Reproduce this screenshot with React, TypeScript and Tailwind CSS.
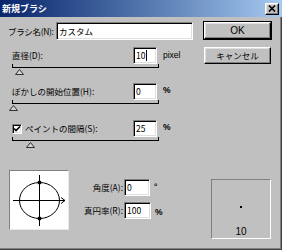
import React from "react";

const sunken =
  "bg-white border border-t-[#808080] border-l-[#808080] border-b-white border-r-white shadow-[inset_1px_1px_0_#000,inset_-1px_-1px_0_#dfdfdf]";
const raised =
  "bg-[#c0c0c0] border border-t-white border-l-white border-b-black border-r-black shadow-[inset_-1px_-1px_0_#808080,inset_1px_1px_0_#dfdfdf]";

function Slider({ thumb }: { thumb: string }) {
  return (
    <div className="ml-[12px] w-[147px]">
      <div className="h-[4px] border-l border-r border-b border-black" />
      <div className={"h-[7px] flex " + thumb}>
        <svg width="9" height="6" viewBox="0 0 9 6" className="mt-[1px]">
          <path d="M4.5 0.5 L8.5 5.5 L0.5 5.5 Z" fill="#d4d4d4" stroke="#303030" strokeWidth="1" />
        </svg>
      </div>
    </div>
  );
}

function Field({ value, caret, w }: { value: string; caret?: boolean; w: string }) {
  return (
    <div className={sunken + " h-[17px] flex items-center pl-[2px] shrink-0 " + w}>
      <span className="leading-none">{value}</span>
      {caret && <span className="w-px h-[11px] bg-black ml-[1px]" />}
    </div>
  );
}

export default function App() {
  return (
    <div className="w-[282px] h-[250px] bg-[#c0c0c0] flex flex-col overflow-hidden font-['Noto_Sans_CJK_JP',sans-serif] text-[8.5px] text-black whitespace-nowrap">
      {/* Title bar */}
      <div className="h-[17px] shrink-0 flex items-center justify-between bg-gradient-to-r from-[#0a246a] to-[#a6caf0] pl-[2px] pr-[3px]">
        <span className="text-white font-bold text-[9px] leading-none">新規ブラシ</span>
        <div className={raised + " w-[14px] h-[12px] flex items-center justify-center"}>
          <svg width="8" height="7" viewBox="0 0 8 7">
            <path d="M1 0.5 L7 6.5 M7 0.5 L1 6.5" stroke="#000" strokeWidth="1.6" />
          </svg>
        </div>
      </div>

      {/* Body */}
      <div className="flex-1 flex flex-col border-r border-b border-[#404040]">
        <div className="flex-1 flex flex-col border-r border-b border-[#808080]">
          <div className="flex">
            {/* Left column */}
            <div className="w-[204px] flex flex-col">
              <div className="mt-[5px] h-[18px] flex items-center">
                <span className="ml-[8px] w-[48px] shrink-0 tracking-[-0.3px]">ブラシ名(N):</span>
                <div className={sunken + " w-[137px] h-[18px] flex items-center pl-[2px] shrink-0"}>カスタム</div>
              </div>

              <div className="mt-[7px] h-[17px] flex items-center">
                <span className="ml-[12px] w-[121px] shrink-0">直径(D):</span>
                <Field value="10" caret w="w-[24px]" />
                <span className="ml-[6px] font-['Liberation_Sans',sans-serif]">pixel</span>
              </div>
              <Slider thumb="ml-[3px]" />

              <div className="mt-[8px] h-[17px] flex items-center">
                <span className="ml-[12px] w-[121px] shrink-0">ぼかしの開始位置(H):</span>
                <Field value="0" w="w-[24px]" />
                <span className="ml-[6px] self-start mt-[1px] font-bold font-['Liberation_Sans',sans-serif]">%</span>
              </div>
              <Slider thumb="ml-[-3px]" />

              <div className="mt-[9px] h-[17px] flex items-center">
                <div className={sunken + " ml-[12px] w-[10px] h-[10px] flex items-center justify-center shrink-0"}>
                  <svg width="8" height="8" viewBox="0 0 8 8">
                    <path d="M1 3.5 L3 5.5 L7 1.5" stroke="#000" strokeWidth="1.6" fill="none" />
                  </svg>
                </div>
                <span className="ml-[3px] w-[108px] shrink-0">ペイントの間隔(S):</span>
                <Field value="25" w="w-[24px]" />
                <span className="ml-[6px] self-start mt-[1px] font-bold font-['Liberation_Sans',sans-serif]">%</span>
              </div>
              <Slider thumb="ml-[14px]" />
            </div>

            {/* Buttons */}
            <div className="flex flex-col gap-[8px] mt-[5px]">
              <div className={raised + " w-[67px] h-[17px] flex items-center justify-center outline outline-1 outline-black font-['Liberation_Sans',sans-serif] text-[10px]"}>
                OK
              </div>
              <div className={raised + " w-[67px] h-[17px] flex items-center justify-center"}>キャンセル</div>
            </div>
          </div>

          {/* Bottom section */}
          <div className="flex items-start mt-[22px]">
            <div className="ml-[9px] w-[60px] h-[60px] bg-white border border-t-[#808080] border-l-[#808080] border-b-[#e8e8e8] border-r-[#e8e8e8] shrink-0">
              <svg width="58" height="58" viewBox="0 0 58 58">
                <ellipse cx="29.5" cy="29.5" rx="20" ry="18" fill="none" stroke="#000" strokeWidth="1" />
                <path d="M3 29.5 H55 M29.5 4 V55" stroke="#000" strokeWidth="1" />
                <path d="M51 26.5 L55 29.5 L51 32.5" stroke="#000" strokeWidth="1" fill="none" />
                <circle cx="29.5" cy="11.5" r="2" fill="#000" />
                <circle cx="29.5" cy="47.5" r="2" fill="#000" />
              </svg>
            </div>

            <div className="mt-[9px] flex flex-col gap-[6px]">
              <div className="flex items-center h-[17px]">
                <span className="w-[55px] text-right pr-[1px] shrink-0">角度(A):</span>
                <Field value="0" w="w-[26px]" />
                <span className="ml-[4px] self-start mt-[1px] font-bold">°</span>
              </div>
              <div className="flex items-center h-[17px]">
                <span className="w-[55px] text-right pr-[1px] shrink-0">真円率(R):</span>
                <Field value="100" w="w-[27px]" />
                <span className="ml-[4px] self-start mt-[4px] font-bold font-['Liberation_Sans',sans-serif]">%</span>
              </div>
            </div>

            <div className="ml-auto mr-[9px] mt-[9px] w-[60px] h-[60px] border border-t-[#808080] border-l-[#808080] border-b-white border-r-white flex flex-col items-center shrink-0">
              <div className="mt-[26px] w-[2px] h-[2px] bg-black" />
              <span className="mt-auto mb-[1px] leading-none font-['Liberation_Sans',sans-serif] text-[10px]">10</span>
            </div>
          </div>
        </div>
      </div>
    </div>
  );
}
